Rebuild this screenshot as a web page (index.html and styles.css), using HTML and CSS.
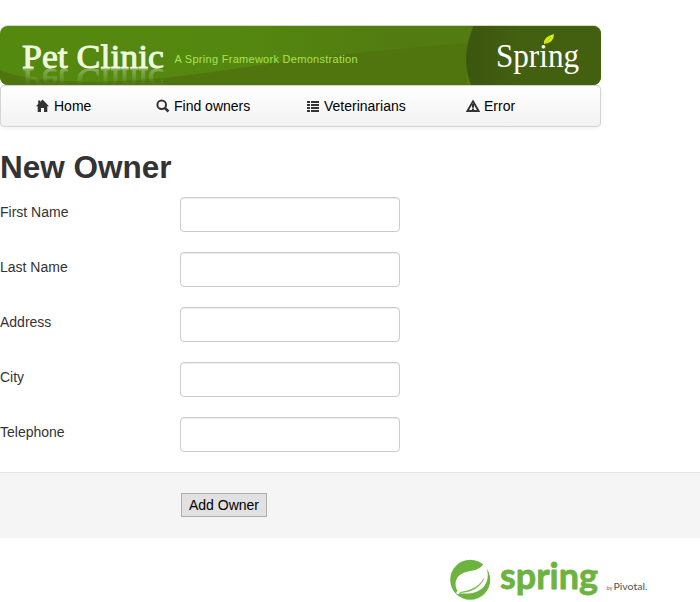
FILE: index.html
```html
<!DOCTYPE html>
<html lang="en">
<head>
<meta charset="utf-8">
<title>PetClinic :: a Spring Framework demonstration</title>
<link rel="stylesheet" href="styles.css">
</head>
<body>
<header class="banner">
  <svg class="banner-art" width="601" height="60" viewBox="0 0 601 60">
    <defs>
      <clipPath id="frame"><rect y="1" width="601" height="59" rx="8"/></clipPath>
      <linearGradient id="base"><stop offset="0" stop-color="#54890f"/><stop offset=".4" stop-color="#54870f"/><stop offset=".65" stop-color="#527c11"/><stop offset="1" stop-color="#527c11"/></linearGradient>
      <linearGradient id="panel"><stop offset="0" stop-color="#3b560e"/><stop offset=".4" stop-color="#436010"/></linearGradient>
      <linearGradient id="fade" x1="0" y1="43" x2="0" y2="58" gradientUnits="userSpaceOnUse"><stop offset="0" stop-color="#fff" stop-opacity=".36"/><stop offset="1" stop-color="#fff" stop-opacity=".03"/></linearGradient>
      <mask id="reflect"><rect y="43" width="200" height="17" fill="url(#fade)"/></mask>
    </defs>
    <rect width="601" height="20" rx="8" fill="#cfdcbd"/>
    <g clip-path="url(#frame)">
      <rect width="601" height="60" fill="url(#base)"/>
      <path d="M0 45Q25 57 100 57Q165 55 240 43Q340 28 467 18V60H0Z" fill="#50750f"/>
      <path d="M474 0Q460 31 471 60H601V0Z" fill="url(#panel)"/>
      <g mask="url(#reflect)"><text class="wordmark" transform="translate(0 86) scale(1 -1)" x="22" y="42.500" textLength="142" lengthAdjust="spacingAndGlyphs" aria-hidden="true">Pet Clinic</text></g>
      <text class="wordmark" x="22" y="42.500" textLength="142" lengthAdjust="spacingAndGlyphs">Pet Clinic</text>
      <text class="tagline" x="174.500" y="38" textLength="183">A Spring Framework Demonstration</text>
      <text class="spring-mark" x="496" y="42" textLength="83" lengthAdjust="spacingAndGlyphs">Spring</text>
      <path d="M544 19Q543 12 554 9Q554 18 544 19Z" fill="#d8ef10"/>
      <path d="M545 19L551 12" stroke="#9aaf0c" stroke-width=".7"/>
    </g>
  </svg>
</header>
<nav class="navbar">
  <a class="home"><svg width="14" height="14" viewBox="0 0 14 14"><path d="M6.500 .500L13 7.200H11.300V13H8V9H5V13H1.700V7.200H0L2.200 5V1.500H4.200V2.900Z"/></svg>Home</a>
  <a class="find"><svg width="14" height="14" viewBox="0 0 14 14"><g fill="none" stroke="#333" stroke-width="2"><circle cx="5.700" cy="5.700" r="4.300"/><path d="M8.800 8.800L12.500 12.500" stroke-width="2.600"/></g></svg>Find owners</a>
  <a class="vets"><svg width="14" height="14" viewBox="0 0 14 14"><path d="M1 2H4V4H1ZM5 2H13V4H5ZM1 5H4V7H1ZM5 5H13V7H5ZM1 8H4V10H1ZM5 8H13V10H5ZM1 11H4V13H1ZM5 11H13V13H5Z"/></svg>Veterinarians</a>
  <a class="error"><svg width="14" height="14" viewBox="0 0 14 14"><path d="M7 2.300L12.600 12H1.400Z" fill="none" stroke="#333" stroke-width="1.900"/><path d="M6 5H8V8.700H6ZM6 9.500H8V11H6Z"/></svg>Error</a>
</nav>
<main>
  <h1>New Owner</h1>
  <form>
    <div class="field"><label for="first">First Name</label><input id="first" type="text"></div>
    <div class="field"><label for="last">Last Name</label><input id="last" type="text"></div>
    <div class="field"><label for="address">Address</label><input id="address" type="text"></div>
    <div class="field"><label for="city">City</label><input id="city" type="text"></div>
    <div class="field"><label for="phone">Telephone</label><input id="phone" type="text"></div>
    <div class="actions"><button type="button">Add Owner</button></div>
  </form>
</main>
<footer>
  <svg class="sponsor" width="202" height="50" viewBox="0 0 202 50">
    <circle cx="20.200" cy="27.800" r="20" fill="#6db33f"/>
    <path d="M34.500 10.500C31 17 25 18.500 18 19.500C10 21 5.500 26 5.500 32C5.500 36 7 38.500 9 41C18 42.500 28 41.500 34 34.500C40 27 38 18 34.500 10.500Z" fill="#fff"/>
    <path d="M8 40.500C20 39.500 29 35 34 26.500C30 35.500 21 41 8 40.500Z" fill="#6db33f" stroke="#6db33f" stroke-width=".5"/>
    <circle cx="8" cy="40.600" r="1.700" fill="#fff"/>
    <text class="spring-logo" x="50" y="37" textLength="98" lengthAdjust="spacingAndGlyphs">spring</text>
    <text class="by" x="156.500" y="38" textLength="6" lengthAdjust="spacingAndGlyphs">by</text>
    <text class="pivotal" x="163.500" y="38" textLength="34" lengthAdjust="spacingAndGlyphs">Pivotal.</text>
  </svg>
</footer>
</body>
</html>
```

FILE: styles.css
```css
* { box-sizing: border-box; }
body {
  margin: 0;
  padding-top: 25px;
  background: #fff;
  color: #333;
  font: 14px/20px "Liberation Sans", Arial, sans-serif;
  overflow: hidden;
}
svg { display: block; }
.banner { height: 60px; }
.wordmark {
  font: 34px "Liberation Serif", serif;
  fill: #f0fae0;
  stroke: #f0fae0;
  stroke-width: .9px;
}
.tagline { font: 11px "Liberation Sans", sans-serif; fill: #a9e34f; }
.spring-mark { font: 33px "Liberation Serif", serif; fill: #fff; }

.navbar {
  display: grid;
  grid-template-columns: 120px 150px 160px 1fr;
  align-items: center;
  width: 601px;
  height: 42px;
  padding-left: 35px;
  border: 1px solid #d4d4d4;
  border-radius: 4px;
  background: linear-gradient(#fff, #f2f2f2);
  box-shadow: 0 1px 4px rgba(0, 0, 0, .065);
}
.navbar a { display: flex; align-items: center; gap: 4px; color: #000; }
.navbar svg { fill: #333; }

h1 {
  margin: 20px 0 10px;
  font-size: 31.5px;
  line-height: 40px;
  font-weight: bold;
}
.field { display: flex; height: 35px; margin-bottom: 20px; }
.field label { width: 180px; padding-top: 5px; }
.field input {
  width: 220px;
  height: 35px;
  border: 1px solid #ccc;
  border-radius: 4px;
  background: #fff;
  box-shadow: inset 0 1px 1px rgba(0, 0, 0, .075);
}
.actions {
  height: 66px;
  padding: 20px 0 0 181px;
  border-top: 1px solid #e5e5e5;
  background: #f5f5f5;
}
.actions button {
  display: block;
  width: 86px;
  height: 24px;
  padding: 0;
  border: 1px solid #adadad;
  background: #e1e1e1;
  color: #000;
  font: 14px/20px "Liberation Sans", Arial, sans-serif;
}
footer { display: flex; justify-content: flex-end; padding: 14px 48px 0 0; }
.spring-logo {
  font: bold 36px Lato, sans-serif;
  fill: #6db33f;
  stroke: #6db33f;
  stroke-width: .8px;
  stroke-linejoin: round;
}
.by { font: 6px Lato, sans-serif; fill: #666; }
.pivotal { font: 9px Lato, sans-serif; fill: #555; }
```
